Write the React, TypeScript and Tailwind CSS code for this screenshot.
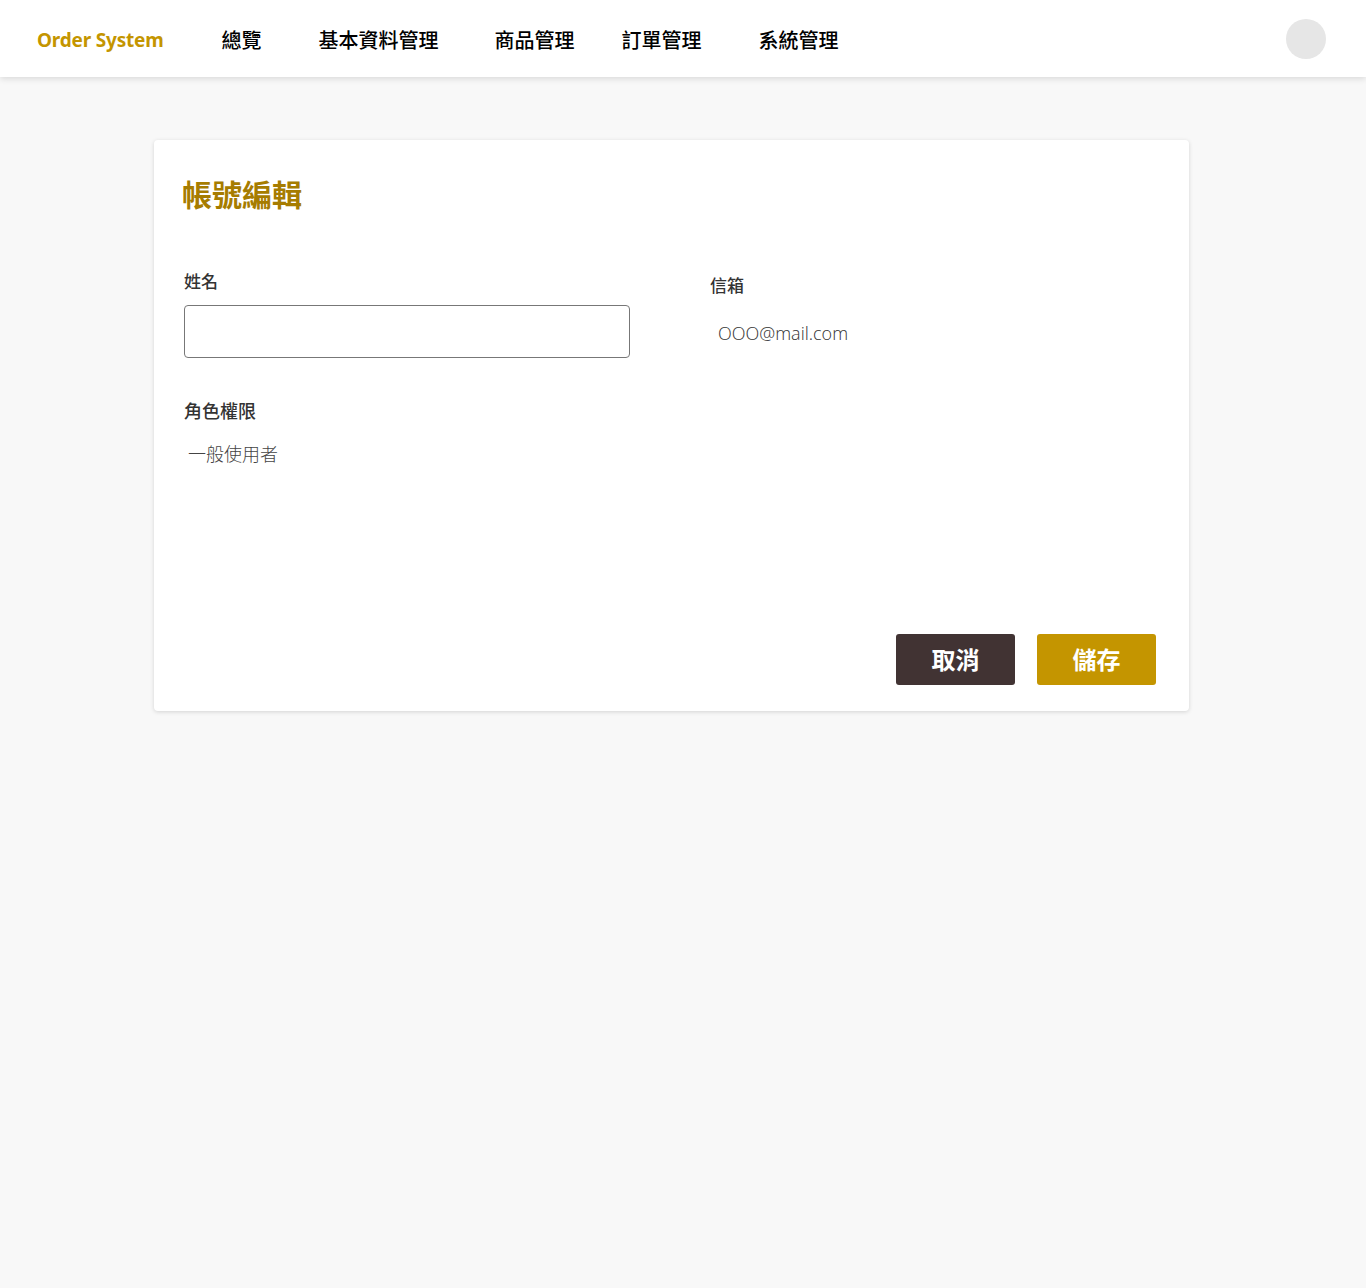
import React from 'react';

const FONT = { fontFamily: '"Noto Sans", "Noto Sans CJK TC", sans-serif' };

const navItems = [
    { label: '總覽', cls: 'ml-[58px]' },
    { label: '基本資料管理', cls: 'ml-[57px]' },
    { label: '商品管理', cls: 'ml-[56px]' },
    { label: '訂單管理', cls: 'ml-[47px]' },
    { label: '系統管理', cls: 'ml-[57px]' },
];

const Header: React.FC = () => (
    <header className="h-[77px] bg-white shadow-[0_2px_6px_rgba(0,0,0,0.12)] flex items-center pl-[37px] pr-[40px] relative z-10">
        <span className="text-[19px] font-bold text-[#c49500] tracking-[-0.2px] pt-[4px]">Order System</span>
        <nav className="flex items-center">
            {navItems.map(item => (
                <a key={item.label} className={`${item.cls} text-[20px] font-medium text-black leading-none pt-[5px] cursor-pointer`}>
                    {item.label}
                </a>
            ))}
        </nav>
        <div className="ml-auto w-10 h-10 rounded-full bg-[#e6e6e6]"></div>
    </header>
);

export default function App() {
    return (
        <div className="min-h-[1288px] bg-[#f8f8f8]" style={FONT}>
            <Header />
            <main className="pt-[63px] px-[154px] pr-[177px]">
                <div className="bg-white rounded-[4px] shadow-[0_1px_4px_rgba(0,0,0,0.15)] pl-[28px] pr-[33px] pt-[35px] pb-[26px]">
                    <h1 className="text-[30px] font-bold text-[#a67c00] leading-[40px]">帳號編輯</h1>

                    <div className="mt-[54px] pl-[2px] grid grid-cols-[446px_1fr] gap-x-[80px]">
                        <div>
                            <label className="block text-[17px] font-medium text-[#333] leading-[25px]">姓名</label>
                            <input
                                type="text"
                                className="mt-[11px] w-[446px] h-[53px] border border-[#777] rounded-[4px] px-3 text-[17px] outline-none"
                            />
                        </div>
                        <div className="pt-[4px]">
                            <label className="block text-[17px] font-medium text-[#333] leading-[25px]">信箱</label>
                            <p className="mt-[23px] pl-[8px] text-[18px] text-[#333] font-light leading-[25px]" style={{ fontFamily: '"Open Sans", "Noto Sans CJK TC", sans-serif' }}>OOO@mail.com</p>
                        </div>

                        <div className="mt-[40px]">
                            <label className="block text-[18px] font-medium text-[#333] leading-[26px]">角色權限</label>
                            <p className="mt-[17px] pl-[4px] text-[18px] text-[#444] font-light leading-[26px]">一般使用者</p>
                        </div>
                    </div>

                    <div className="mt-[167px] flex justify-end gap-[22px]">
                        <button className="w-[119px] h-[51px] rounded-[3px] bg-[#413333] text-white text-[24px] font-bold">取消</button>
                        <button className="w-[119px] h-[51px] rounded-[3px] bg-[#c49500] text-white text-[24px] font-bold">儲存</button>
                    </div>
                </div>
            </main>
        </div>
    );
}
